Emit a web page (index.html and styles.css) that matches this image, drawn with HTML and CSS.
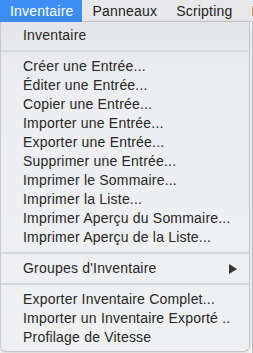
FILE: index.html
```html
<!DOCTYPE html>
<html lang="fr">
<head>
<meta charset="utf-8">
<link rel="stylesheet" href="styles.css">
</head>
<body>
<div class="screen">
  <div class="menubar">
    <span class="title active">Inventaire</span>
    <span class="title">Panneaux</span>
    <span class="title">Scripting</span>
    <span class="title">L</span>
  </div>
  <div class="backdrop">
    <div class="bg-edge"></div>
  </div>
  <div class="menu">
    <div class="item">Inventaire</div>
    <div class="sep"></div>
    <div class="item">Créer une Entrée...</div>
    <div class="item">Éditer une Entrée...</div>
    <div class="item">Copier une Entrée...</div>
    <div class="item">Importer une Entrée...</div>
    <div class="item">Exporter une Entrée...</div>
    <div class="item">Supprimer une Entrée...</div>
    <div class="item">Imprimer le Sommaire...</div>
    <div class="item">Imprimer la Liste...</div>
    <div class="item">Imprimer Aperçu du Sommaire...</div>
    <div class="item">Imprimer Aperçu de la Liste...</div>
    <div class="sep"></div>
    <div class="item sub"><span>Groupes d'Inventaire</span><span class="arrow"></span></div>
    <div class="sep"></div>
    <div class="item">Exporter Inventaire Complet...</div>
    <div class="item">Importer un Inventaire Exporté ..</div>
    <div class="item">Profilage de Vitesse</div>
  </div>
</div>
</body>
</html>
```
FILE: styles.css
```css
html, body {
  margin: 0;
  padding: 0;
  background: #ffffff;
}
.screen {
  position: relative;
  width: 253px;
  height: 353px;
  overflow: hidden;
  font-family: "Liberation Sans", Arial, sans-serif;
  font-size: 14px;
  letter-spacing: 0.2px;
  color: #272727;
}
.menubar {
  display: flex;
  height: 22px;
  align-items: center;
  background: #e8e8ea;
  border-bottom: 1px solid #c9c9cc;
  box-sizing: border-box;
  white-space: nowrap;
}
.title {
  height: 22px;
  line-height: 22px;
  padding: 0 9px 0 10px;
  color: #222;
}
.title.active {
  background: #3d8ef4;
  color: #ffffff;
}
.backdrop {
  position: absolute;
  left: 0;
  top: 22px;
  width: 253px;
  height: 331px;
}
.bg-edge {
  position: absolute;
  right: 0;
  top: 0;
  width: 1px;
  height: 331px;
  background: #c5c5c8;
}
.menu {
  position: absolute;
  left: 0;
  top: 22px;
  width: 250px;
  box-sizing: border-box;
  padding: 4px 0 4px;
  background: linear-gradient(#e4e5e9 0px, #eceef1 60px, #eff0f2 100%);
  border-radius: 0 0 6px 6px;
  border-left: 1px solid #c9c9cc;
  border-right: 1px solid #c4c4c8;
  border-bottom: 1px solid #c4c4c8;
  box-shadow: 0 3px 8px rgba(0,0,0,0.18);
}
.item {
  height: 19px;
  line-height: 19px;
  padding: 0 14px 0 22px;
  white-space: nowrap;
}
.item.sub {
  display: flex;
  justify-content: space-between;
  align-items: center;
}
.arrow {
  width: 0;
  height: 0;
  border-top: 5px solid transparent;
  border-bottom: 5px solid transparent;
  border-left: 8px solid #333;
  margin-right: -2px;
}
.sep {
  height: 2px;
  margin: 5px 0 5px;
  background: #d6d7da;
}
```
